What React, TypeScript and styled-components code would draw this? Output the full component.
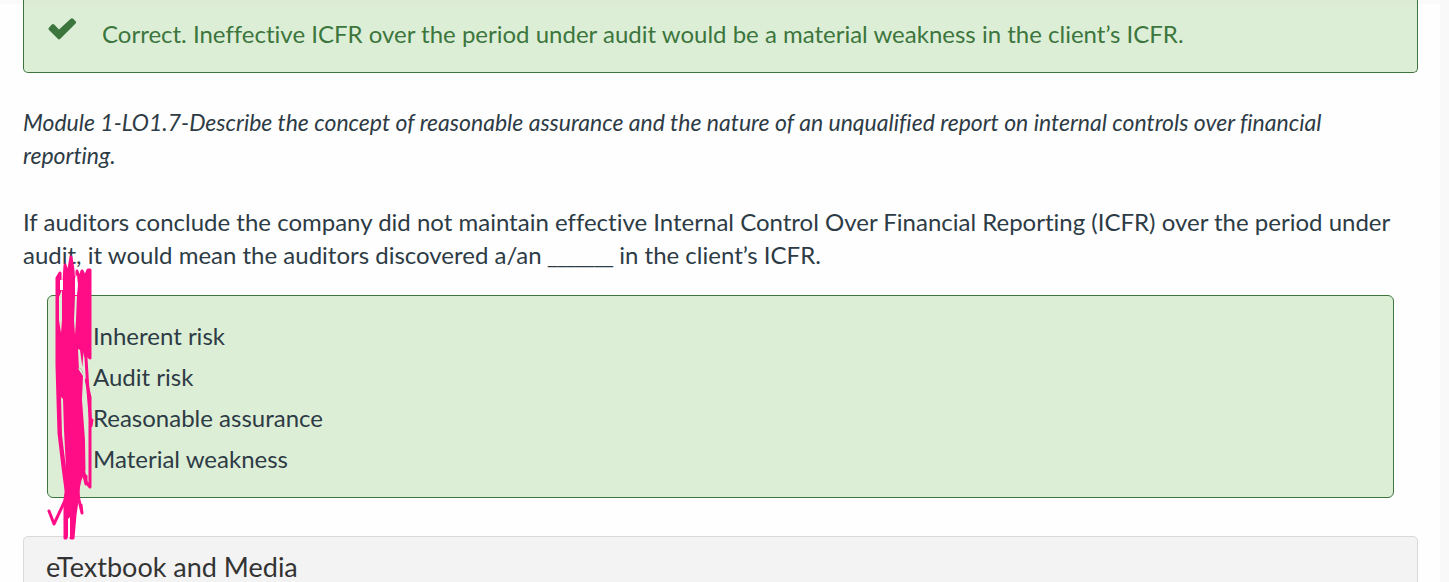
import React from 'react';
import styled, { createGlobalStyle } from 'styled-components';

const GlobalStyle = createGlobalStyle`
  * { box-sizing: border-box; }
  html { background: #f9f9f9; }
  body {
    margin: 0;
    color: #2d3b45;
    font-family: Lato, sans-serif;
    font-size: 24px;
    font-variant-ligatures: no-common-ligatures;
    line-height: 33px;
    overflow-x: hidden;
  }
`;

const Page = styled.main`
  margin-right: 9px;
  padding: 0 22px 0 23px;
  background: linear-gradient(#fafafa 4px, #fefefe 4px);
`;

const Feedback = styled.div`
  display: flex;
  align-items: flex-start;
  gap: 26px;
  padding: 17px 24px 22px;
  border: 1px solid #3c763d;
  border-top: 0;
  border-radius: 0 0 5px 5px;
  background: linear-gradient(#dbebd5 4px, #ddeed7 4px);
  color: #3c763d;

  svg { flex: none; }
`;

const Objective = styled.p`
  margin: 33px 0;
  padding-right: 24px;
  font-size: 23px;
  font-style: italic;
`;

const Question = styled.form`
  margin: 0;
`;

const Prompt = styled.p`
  margin: 0 0 24px;
`;

const Blank = styled.span`
  font-family: "Noto Sans", sans-serif;
  font-size: 21px;
  line-height: 1;
`;

const Answers = styled.div`
  position: relative;
  display: flex;
  flex-direction: column;
  align-items: flex-start;
  gap: 8px;
  margin: 0 24px;
  padding: 23px 20px 22px;
  border: 1px solid #3c763d;
  border-radius: 6px;
  background: #ddeed7;
`;

const Option = styled.label`
  display: flex;
  align-items: center;
  gap: 9px;
`;

const Radio = styled.input`
  appearance: none;
  width: 16px;
  height: 16px;
  margin: 0;
`;

const Marker = styled.svg`
  position: absolute;
  top: -47px;
  left: -9px;
  pointer-events: none;
`;

const Panel = styled.section`
  margin-top: 38px;
  padding: 13px 22px;
  border: 1px solid #d9d9d9;
  border-radius: 5px;
  background: #f3f3f3;
`;

const PanelTitle = styled.h2`
  margin: 0;
  color: #333;
  font-size: 27px;
  font-weight: 400;
  line-height: 33px;
`;

const options = ['Inherent risk', 'Audit risk', 'Reasonable assurance', 'Material weakness'];

function CheckIcon() {
  return (
    <svg width="28" height="24" viewBox="0 -1 28 24" aria-hidden="true">
      <path
        fill="currentColor"
        d="M1.1 9.4 3.8 6.6Q5 5.6 6.2 6.6L11 11.6 22.7.7Q24-.4 25.2.7L27.6 3.2Q28.7 4.4 27.6 5.6L12.3 20.8Q11 22 9.8 20.8L1 11.9Q-.2 10.6 1.1 9.4Z"
      />
    </svg>
  );
}

function Scribble() {
  return (
    <Marker width="60" height="300" viewBox="39 249 60 300" aria-hidden="true">
      <g fill="#ff0d86" stroke="#ff0d86" strokeWidth="3" strokeLinecap="round" strokeLinejoin="round">
        <path d="M57 278 60 273 60 290 62 295 64 281 65 265 68 275 71 257 73 270 74 285 77 284 77 271 79 279 82 271 85 277 88 270 90 270 90 358 86 354 83 340 81 365 82 377 81 400 84 430 84 470 80 480 77 494 71 501 66 490 63 467 59 433 58 400 57 365Z" />
        <path d="M67 485 79 475 78 494 75 515 73 538 71 538 70 520 66 538 65 538 65 500Z" />
        <g fill="none">
          <path d="M82 340 86 358 88 391 91 426 92 420" />
          <path d="M86 380 90 397 90 487 86 482 80 455" />
          <path d="M76 480 79 500 82 513 81 505" />
          <path d="M79 455 86 484 86 476" />
          <path d="M69 492 54 524 49 511 54 524" />
        </g>
      </g>
      <g fill="#ddeed7">
        <path d="M59 297 62 290 62 320 61 333 59 320Z" />
        <path d="M75 296 77 296 76 320 75 335 74 320Z" />
        <path d="M78 349 80 350 82 365 84 370 86 392 88 420 88 470 86 472 85 440 82 400 83 376 79 370Z" />
        <path d="M61 397 63 399 64 430 66 468 62 435Z" />
      </g>
      <g fill="#fefefe">
        <path d="M75 278 77 275 78 285 77 295 75 295Z" />
        <path d="M60 280 63 280 63 290 60 290Z" />
        <path d="M68 519 70 517 70 537 68 537Z" />
      </g>
      <path d="M78 369Q82 366 83 374" fill="none" stroke="#b5c4b1" strokeWidth="1" />
    </Marker>
  );
}

export default function App() {
  return (
    <>
      <GlobalStyle />
      <Page>
        <Feedback role="status">
          <CheckIcon />
          <span>
            Correct. Ineffective ICFR over the period under audit would be a material weakness in the client’s ICFR.
          </span>
        </Feedback>
        <Objective>
          Module 1-LO1.7-Describe the concept of reasonable assurance and the nature of an unqualified report on
          internal controls over financial reporting.
        </Objective>
        <Question>
          <Prompt id="prompt">
            If auditors conclude the company did not maintain effective Internal Control Over Financial Reporting
            (ICFR) over the period under audit, it would mean the auditors discovered a/an <Blank>_______</Blank> in
            the client’s ICFR.
          </Prompt>
          <Answers role="radiogroup" aria-labelledby="prompt">
            {options.map((text) => (
              <Option key={text}>
                <Radio type="radio" name="answer" value={text} defaultChecked={text === 'Material weakness'} />
                {text}
              </Option>
            ))}
            <Scribble />
          </Answers>
        </Question>
        <Panel>
          <PanelTitle>eTextbook and Media</PanelTitle>
        </Panel>
      </Page>
    </>
  );
}
